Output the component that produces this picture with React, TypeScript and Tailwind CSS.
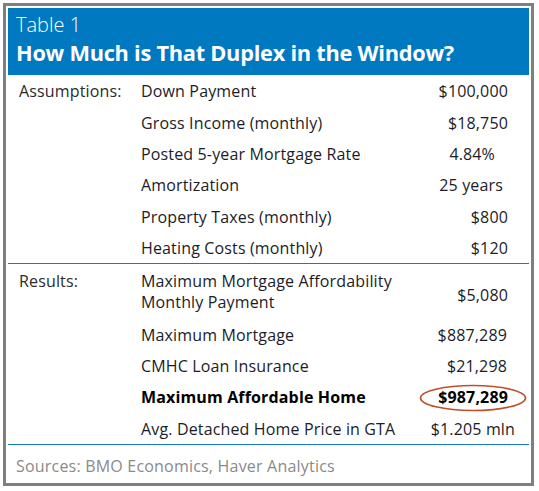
import React from "react";

type Row = { label?: string; item: React.ReactNode; value: string; pr: string; bold?: boolean; tall?: boolean };

const assumptions: Row[] = [
  { label: "Assumptions:", item: "Down Payment", value: "$100,000", pr: "pr-[21px]" },
  { item: "Gross Income (monthly)", value: "$18,750", pr: "pr-[21px]" },
  { item: "Posted 5-year Mortgage Rate", value: "4.84%", pr: "pr-[34px]" },
  { item: "Amortization", value: "25 years", pr: "pr-[26px]" },
  { item: "Property Taxes (monthly)", value: "$800", pr: "pr-[21px]" },
  { item: "Heating Costs (monthly)", value: "$120", pr: "pr-[21px]" },
];

const results: Row[] = [
  {
    label: "Results:",
    item: (
      <>
        Maximum Mortgage Affordability
        <br />
        Monthly Payment
      </>
    ),
    value: "$5,080",
    pr: "pr-[21px]",
    tall: true,
  },
  { item: "Maximum Mortgage", value: "$887,289", pr: "pr-[22px]" },
  { item: "CMHC Loan Insurance", value: "$21,298", pr: "pr-[22px]" },
  { item: "Maximum Affordable Home", value: "$987,289", pr: "pr-[21px]", bold: true },
  { item: "Avg. Detached Home Price in GTA", value: "$1.205 mln", pr: "pr-[14px]" },
];

function TableRow({ row }: { row: Row }) {
  return (
    <div className={`flex ${row.tall ? "h-[54px] items-start pt-[7px]" : "h-[31.4px] items-center pt-[2px]"}`}>
      <div className="w-[133px] shrink-0 pl-[11px] leading-[21px] text-[#2b2b2b]">{row.label}</div>
      <div className={`flex-1 leading-[21px] ${row.bold ? "font-bold text-black" : ""}`}>{row.item}</div>
      <div
        className={`relative shrink-0 leading-[21px] ${row.pr} ${row.tall ? "self-center pt-[2px]" : ""} ${row.bold ? "font-bold text-black" : ""}`}
      >
        {row.value}
        {row.bold && (
          <svg
            className="absolute left-[-19px] top-[-3px] pointer-events-none"
            width="108"
            height="28"
            viewBox="0 0 108 28"
          >
            <ellipse cx="54" cy="14" rx="52.5" ry="12.5" fill="none" stroke="#c0502b" strokeWidth="1.6" />
          </svg>
        )}
      </div>
    </div>
  );
}

export default function App() {
  return (
    <div className="w-[539px] h-[491px] bg-white pt-[3px] pl-[3px]" style={{ fontFamily: '"Open Sans", "Noto Sans", sans-serif' }}>
      <div className="w-[531px] h-[483px] border-[3px] border-[#7f7f7f] p-[2px] text-[16px] tracking-[0.15px] text-[#1c1c28]">
        <div className="h-[67px] bg-[#0079c1] pl-[8px] pt-[4px] text-white tracking-normal">
          <div className="text-[20px] leading-[26px] font-light">Table 1</div>
          <div className="text-[21.75px] leading-[30px] font-bold tracking-[-0.25px]">How Much is That Duplex in the Window?</div>
        </div>

        <div className="border-b-[1.5px] border-[#1878bd]">
          {assumptions.map((r, i) => (
            <TableRow key={i} row={r} />
          ))}
        </div>

        <div className="border-b-[1.5px] border-[#1878bd]">
          {results.map((r, i) => (
            <TableRow key={i} row={r} />
          ))}
        </div>

        <div className="pl-[8px] pt-[9px] text-[16px] leading-[24px] tracking-[0.2px] text-[#8a8a8a]">Sources: BMO Economics, Haver Analytics</div>
      </div>
    </div>
  );
}
